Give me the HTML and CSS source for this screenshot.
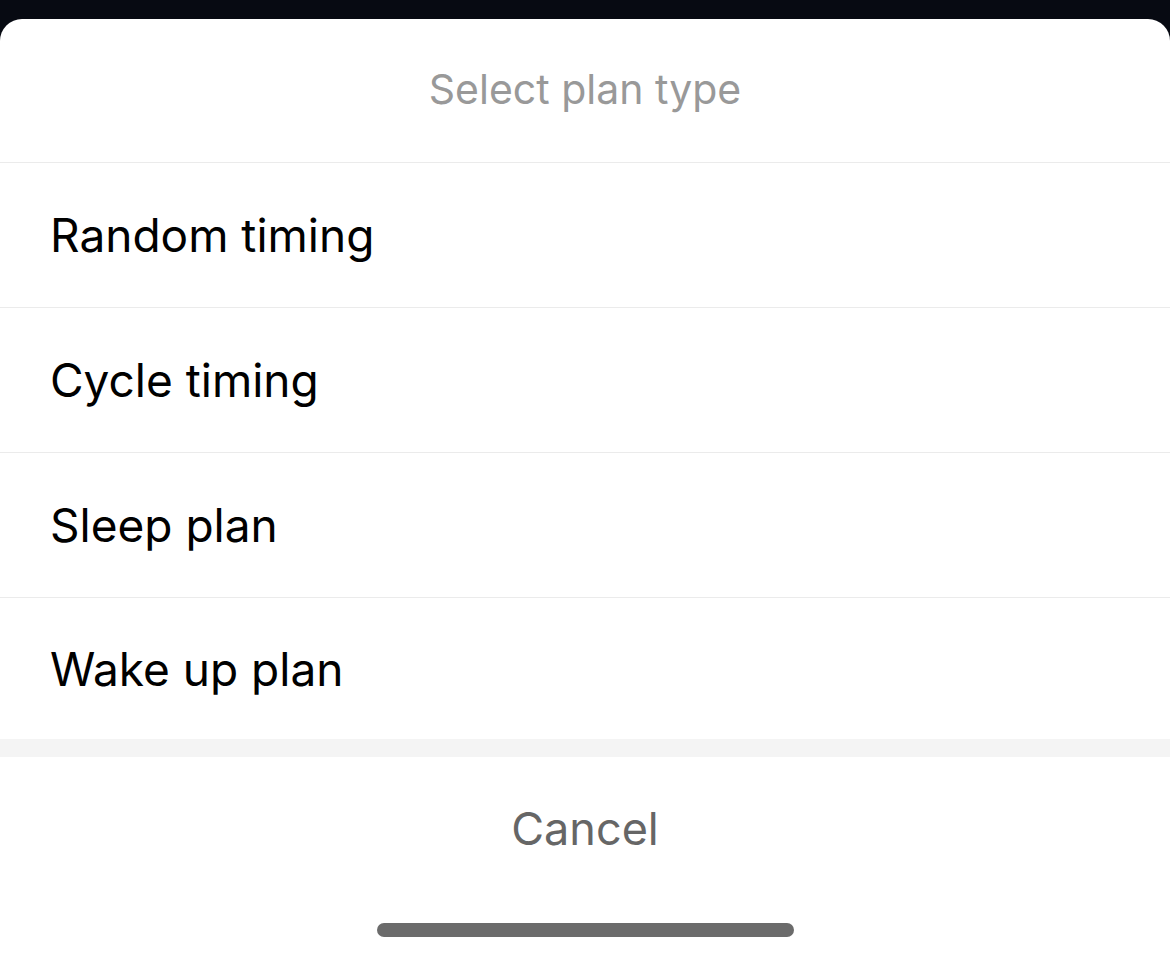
FILE: index.html
```html
<!DOCTYPE html>
<html>
<head>
<meta charset="utf-8">
<link rel="stylesheet" href="styles.css">
</head>
<body>
<div class="backdrop"></div>
<div class="sheet">
  <div class="sheet-title">Select plan type</div>
  <ul class="options">
    <li class="option">Random timing</li>
    <li class="option">Cycle timing</li>
    <li class="option">Sleep plan</li>
    <li class="option">Wake up plan</li>
  </ul>
  <div class="spacer"></div>
  <div class="cancel">Cancel</div>
  <div class="home-area"><div class="home-indicator"></div></div>
</div>
</body>
</html>
```
FILE: styles.css
```css
html, body {
  margin: 0;
  padding: 0;
  height: 100%;
  background: #070a12;
  font-family: Inter, "Noto Sans", sans-serif;
  overflow: hidden;
}
.backdrop {
  height: 19px;
  background: #070a12;
}
.sheet {
  background: #fff;
  border-radius: 22px 22px 0 0;
  height: 943px;
  display: flex;
  flex-direction: column;
}
.sheet-title {
  height: 144px;
  display: flex;
  align-items: center;
  justify-content: center;
  color: #999;
  font-size: 41px;
  padding-bottom: 4px;
  box-sizing: border-box;
  border-bottom: 1px solid #ebebeb;
}
.options {
  list-style: none;
  margin: 0;
  padding: 0;
}
.option {
  height: 144px;
  display: flex;
  align-items: center;
  padding-left: 50px;
  font-size: 46px;
  color: #000;
  border-bottom: 1px solid #ebebeb;
}
.option:last-child {
  border-bottom: none;
  height: 141px;
}
.spacer {
  height: 18px;
  background: #f4f4f4;
}
.cancel {
  height: 145px;
  display: flex;
  align-items: center;
  justify-content: center;
  font-size: 45px;
  color: #666;
  padding-bottom: 3px;
  box-sizing: border-box;
}
.home-area {
  display: flex;
  justify-content: center;
  padding-top: 21px;
}
.home-indicator {
  width: 417px;
  height: 14px;
  border-radius: 7px;
  background: #6b6b6b;
}
```
